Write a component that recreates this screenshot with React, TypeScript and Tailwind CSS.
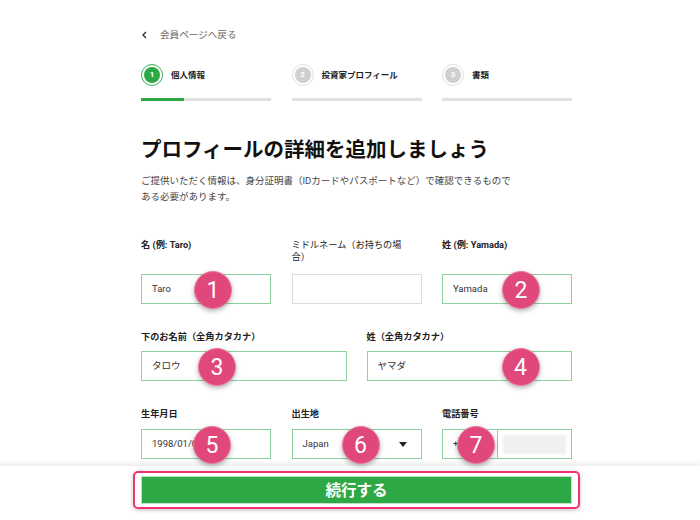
const FONT = "font-['Roboto','Noto_Sans_CJK_JP',sans-serif]";

function Marker({ n, className }: { n: number; className: string }) {
  return (
    <div
      className={`absolute ${className} w-[38px] h-[38px] rounded-full bg-[#e0487c] border border-[#ec7aa0] shadow-[0_2px_5px_rgba(0,0,0,0.3)] flex items-center justify-center text-white text-[23px] font-['Roboto',sans-serif] leading-none z-10`}
    >
      {n}
    </div>
  );
}

function Step({ n, label, active, progress }: { n: number; label: string; active?: boolean; progress: number }) {
  return (
    <div>
      <div className="flex items-center gap-[8px]">
        <div
          className={`w-[22px] h-[22px] rounded-full p-[2px] border-[1.5px] ${active ? "border-[#39b152]" : "border-[#e0e0e0]"}`}
        >
          <div
            className={`w-full h-full rounded-full flex items-center justify-center text-white text-[8px] font-bold ${active ? "bg-[#2ea844]" : "bg-[#cfcfcf]"}`}
          >
            {n}
          </div>
        </div>
        <span className="text-[8.5px] font-bold text-[#222]">{label}</span>
      </div>
      <div className="mt-[12px] h-[3px] bg-[#e0e0e0]">
        <div className="h-full bg-[#2ea844]" style={{ width: `${progress}%` }} />
      </div>
    </div>
  );
}

function Label({ children, bold = true, className = "" }: { children: React.ReactNode; bold?: boolean; className?: string }) {
  return (
    <div className={`text-[9.2px] leading-[12px] text-[#222] ${bold ? "font-bold" : ""} ${className}`}>{children}</div>
  );
}

const box = "relative h-[30px] border flex items-center px-[10px] text-[9.5px] text-[#333]";

export default function App() {
  return (
    <div className={`w-[700px] h-[520px] bg-white overflow-hidden ${FONT}`}>
      <div className="ml-[141px] w-[431px] pt-[28px]">
        <div className="h-[14px] flex items-center gap-[12px] text-[9.6px] text-[#666]">
          <svg width="7" height="8" viewBox="0 0 7 8">
            <path d="M5 1 L2 4 L5 7" fill="none" stroke="#333" strokeWidth="1.4" />
          </svg>
          <span>会員ページへ戻る</span>
        </div>

        <div className="mt-[22px] grid grid-cols-3 gap-x-[20.5px]">
          <Step n={1} label="個人情報" active progress={33} />
          <Step n={2} label="投資家プロフィール" progress={0} />
          <Step n={3} label="書類" progress={0} />
        </div>

        <h1 className="mt-[33px] text-[20.5px] leading-[28px] font-bold text-[#111] font-['Noto_Sans_CJK_JP',sans-serif]">
          プロフィールの詳細を追加しましょう
        </h1>
        <p className="mt-[11px] text-[9.5px] leading-[16px] text-[#444]">
          ご提供いただく情報は、身分証明書（IDカードやパスポートなど）で確認できるもので
          <br />
          ある必要があります。
        </p>

        <div className="mt-[34px] grid grid-cols-3 gap-x-[20.5px]">
          <div>
            <div className="h-[35px]">
              <Label>名 (例: Taro)</Label>
            </div>
            <div className={`${box} border-[#8fd19e]`}>
              Taro
              <Marker n={1} className="left-[52px] top-[-4px]" />
            </div>
          </div>
          <div>
            <div className="h-[35px]">
              <Label bold={false} className="max-w-[122px]">ミドルネーム（お持ちの場合）</Label>
            </div>
            <div className={`${box} border-[#dcdcdc]`} />
          </div>
          <div>
            <div className="h-[35px]">
              <Label>姓 (例: Yamada)</Label>
            </div>
            <div className={`${box} border-[#8fd19e]`}>
              Yamada
              <Marker n={2} className="left-[59px] top-[-4px]" />
            </div>
          </div>
        </div>

        <div className="mt-[27px] grid grid-cols-2 gap-x-[20px]">
          <div>
            <div className="h-[20px]">
              <Label>下のお名前（全角カタカナ）</Label>
            </div>
            <div className={`${box} border-[#8fd19e]`}>
              タロウ
              <Marker n={3} className="left-[56px] top-[-4px]" />
            </div>
          </div>
          <div>
            <div className="h-[20px]">
              <Label>姓（全角カタカナ）</Label>
            </div>
            <div className={`${box} border-[#8fd19e]`}>
              ヤマダ
              <Marker n={4} className="left-[134px] top-[-4px]" />
            </div>
          </div>
        </div>

        <div className="mt-[27px] grid grid-cols-3 gap-x-[20.5px]">
          <div>
            <div className="h-[21px]">
              <Label>生年月日</Label>
            </div>
            <div className={`${box} border-[#8fd19e] gap-[10px]`}>
              <span>1998/01/01</span>
              <svg width="8" height="9" viewBox="0 0 8 9">
                <rect x="1" y="2" width="6" height="6" fill="none" stroke="#444" strokeWidth="1" />
                <rect x="1" y="2" width="6" height="1.5" fill="#444" />
              </svg>
              <Marker n={5} className="left-[51px] top-[-4px]" />
            </div>
          </div>
          <div>
            <div className="h-[21px]">
              <Label>出生地</Label>
            </div>
            <div className={`${box} border-[#8fd19e] justify-between pr-[14px]`}>
              <span>Japan</span>
              <svg width="8" height="5" viewBox="0 0 8 5">
                <path d="M0 0 H8 L4 5 Z" fill="#222" />
              </svg>
              <Marker n={6} className="left-[49px] top-[-4px]" />
            </div>
          </div>
          <div>
            <div className="h-[21px]">
              <Label>電話番号</Label>
            </div>
            <div className="relative h-[30px] border border-[#8fd19e] flex text-[9.5px] text-[#333]">
              <div className="w-[55px] border-r border-[#8fd19e] flex items-center justify-between pl-[10px] pr-[8px]">
                <span>+81</span>
                <svg width="7" height="4" viewBox="0 0 7 4">
                  <path d="M0 0 H7 L3.5 4 Z" fill="#666" />
                </svg>
              </div>
              <div className="flex-1 flex items-center pl-[5px] pr-[5px]">
                <div className="w-full h-[19px] bg-[#efefef] blur-[1px]" />
              </div>
              <Marker n={7} className="left-[14px] top-[-4px]" />
            </div>
          </div>
        </div>
      </div>

      <div className="mt-[7px] h-[60px] bg-white shadow-[0_-3px_5px_rgba(0,0,0,0.08)] pt-[5px]">
        <div className="ml-[133px] w-[447px] h-[38px] border-2 border-[#f0336a] rounded-[5px] px-[6px] py-[3px] shadow-[0_1px_4px_rgba(0,0,0,0.25)]">
          <button className="w-full h-full bg-[#2ea844] border border-[#bfe3c6] text-white text-[15.5px] font-bold font-['Noto_Sans_CJK_JP',sans-serif] flex items-center justify-center">
            続行する
          </button>
        </div>
      </div>
    </div>
  );
}
